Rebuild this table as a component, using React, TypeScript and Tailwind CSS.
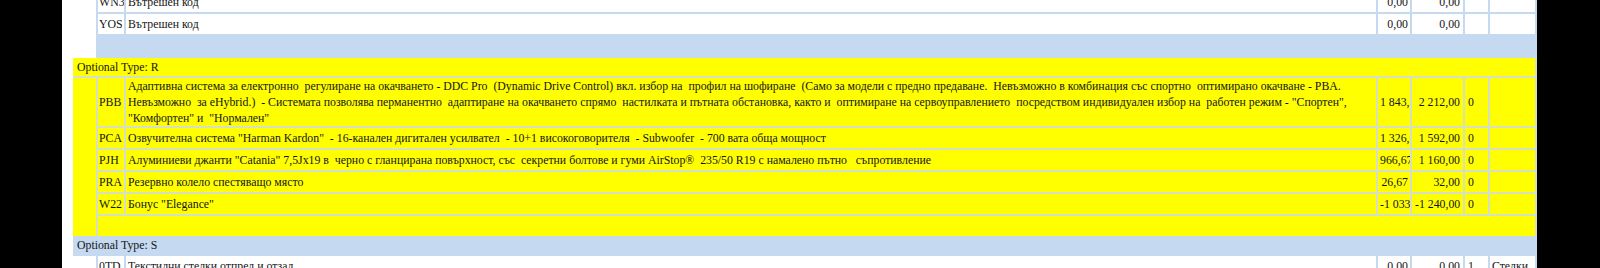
import React from 'react';

type Item = {
  code: string;
  desc: string;
  net: string;
  gross: string;
  qty: string;
  note?: string;
};

const typeR: Item[] = [
  {
    code: 'PBB',
    desc:
      'Адаптивна система за електронно  регулиране на окачването - DDC Pro  (Dynamic Drive Control) вкл. избор на  профил на шофиране  (Само за модели с предно предаване.  Невъзможно в комбинация със спортно  оптимирано окачване - PBA.\n' +
      'Невъзможно  за eHybrid.)  - Системата позволява перманентно  адаптиране на окачването спрямо  настилката и пътната обстановка, както и  оптимиране на сервоуправлението  посредством индивидуален избор на  работен режим - "Спортен",\n' +
      '"Комфортен" и  "Нормален"',
    net: '1 843,33',
    gross: '2 212,00',
    qty: '0',
  },
  {
    code: 'PCA',
    desc: 'Озвучителна система "Harman Kardon"  - 16-канален дигитален усилвател  - 10+1 високоговорителя  - Subwoofer  - 700 вата обща мощност',
    net: '1 326,67',
    gross: '1 592,00',
    qty: '0',
  },
  {
    code: 'PJH',
    desc: 'Алуминиеви джанти "Catania" 7,5Jx19 в  черно с гланцирана повърхност, със  секретни болтове и гуми AirStop®  235/50 R19 с намалено пътно   съпротивление',
    net: '966,67',
    gross: '1 160,00',
    qty: '0',
  },
  { code: 'PRA', desc: 'Резервно колело спестяващо място', net: '26,67', gross: '32,00', qty: '0' },
  { code: 'W22', desc: 'Бонус "Elegance"', net: '-1 033,33', gross: '-1 240,00', qty: '0' },
];

const typeQ: Item[] = [
  { code: 'WN3', desc: 'Вътрешен код', net: '0,00', gross: '0,00', qty: '' },
  { code: 'YOS', desc: 'Вътрешен код', net: '0,00', gross: '0,00', qty: '' },
];

const typeS: Item[] = [
  { code: '0TD', desc: 'Текстилни стелки отпред и отзад', net: '0,00', gross: '0,00', qty: '1', note: 'Стелки' },
];

const Row = ({ item, cell }: { item: Item; cell: string }) => (
  <>
    <div className={`${cell} col-start-2 flex items-center pl-[1px] overflow-hidden whitespace-nowrap`}>{item.code}</div>
    <div className={`${cell} flex items-center pl-[2px] whitespace-pre`}>{item.desc}</div>
    <div className={`${cell} flex items-center`}>
      <div className="w-full overflow-hidden whitespace-nowrap text-right px-[2px]">{item.net}</div>
    </div>
    <div className={`${cell} flex items-center`}>
      <div className="w-full overflow-hidden whitespace-nowrap text-right px-[3px]">{item.gross}</div>
    </div>
    <div className={`${cell} flex items-center pl-[3px]`}>{item.qty}</div>
    <div className={`${cell} flex items-center pl-[2px] overflow-hidden whitespace-nowrap`}>{item.note}</div>
  </>
);

export default function App() {
  return (
    <div className="flex h-[268px] w-[1600px] overflow-hidden bg-black font-['Liberation_Serif','Times_New_Roman',serif] text-[11.8px] leading-[16px] text-[#151515]">
      <div className="w-[62px] shrink-0 bg-black" />
      <div className="w-[1475px] shrink-0 h-[268px] overflow-hidden bg-white pl-[11px]">
        <div className="-mt-[8px]">
          {/* previous group, scrolled partly out of view */}
          <div className="grid grid-cols-[23px_26px_1250px_32px_51px_23px_45px] gap-[2px] bg-[#c5d9f1] pr-[2px]">
            <div className="row-span-3 bg-white" />
            {typeQ.map((item) => (
              <Row key={item.code} item={item} cell="bg-white min-h-[20px]" />
            ))}
            <div className="col-span-6 h-[22px] bg-[#c5d9f1]" />
          </div>

          {/* Optional Type: R */}
          <div className="grid grid-cols-[23px_26px_1250px_32px_51px_23px_45px] gap-[2px] bg-[#d6dfc6] pr-[2px]">
            <div className="col-span-7 h-[18px] bg-[#ffff00] flex items-center pl-[4px]">Optional Type: R</div>
            <div className="row-span-6 bg-[#ffff00]" />
            {typeR.map((item) => (
              <Row key={item.code} item={item} cell="bg-[#ffff00] min-h-[20px]" />
            ))}
            <div className="col-span-6 h-[20px] bg-[#ffff00]" />
          </div>

          {/* Optional Type: S */}
          <div className="grid grid-cols-[23px_26px_1250px_32px_51px_23px_45px] gap-[2px] bg-[#c5d9f1] pr-[2px]">
            <div className="col-span-7 h-[18px] bg-[#c5d9f1] flex items-center pl-[4px]">Optional Type: S</div>
            <div className="row-span-2 bg-white" />
            {typeS.map((item) => (
              <Row key={item.code} item={item} cell="bg-white min-h-[20px]" />
            ))}
            <div className="col-span-6 h-[20px] bg-white" />
          </div>
        </div>
      </div>
      <div className="flex-1 bg-black" />
    </div>
  );
}
